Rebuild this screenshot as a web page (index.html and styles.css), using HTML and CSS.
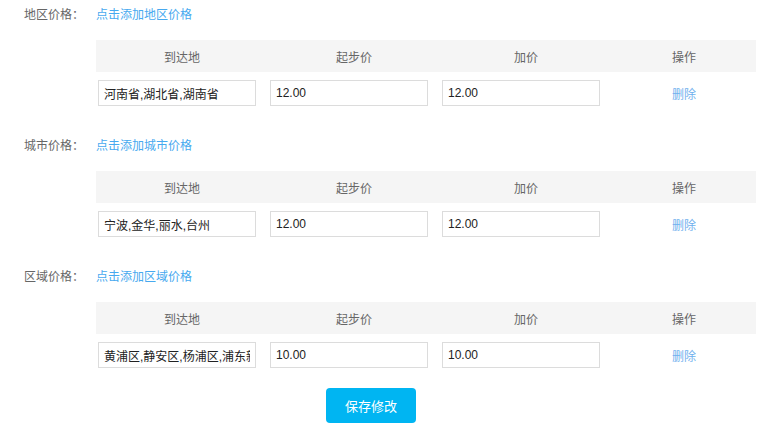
FILE: index.html
```html
<!DOCTYPE html>
<html lang="zh-CN">
<head>
<meta charset="utf-8">
<title>价格设置</title>
<link rel="stylesheet" href="styles.css">
</head>
<body>
<div class="page">
  <section class="block">
    <div class="block-head">
      <span class="block-label">地区价格：</span>
      <a class="add-link" href="#">点击添加地区价格</a>
    </div>
    <table class="price-table">
      <thead>
        <tr><th class="c1">到达地</th><th class="c2">起步价</th><th class="c3">加价</th><th class="c4">操作</th></tr>
      </thead>
      <tbody>
        <tr>
          <td><input class="field" type="text" value="河南省,湖北省,湖南省"></td>
          <td><input class="field" type="text" value="12.00"></td>
          <td><input class="field" type="text" value="12.00"></td>
          <td class="op"><a class="del" href="#">删除</a></td>
        </tr>
      </tbody>
    </table>
  </section>

  <section class="block">
    <div class="block-head">
      <span class="block-label">城市价格：</span>
      <a class="add-link" href="#">点击添加城市价格</a>
    </div>
    <table class="price-table">
      <thead>
        <tr><th class="c1">到达地</th><th class="c2">起步价</th><th class="c3">加价</th><th class="c4">操作</th></tr>
      </thead>
      <tbody>
        <tr>
          <td><input class="field" type="text" value="宁波,金华,丽水,台州"></td>
          <td><input class="field" type="text" value="12.00"></td>
          <td><input class="field" type="text" value="12.00"></td>
          <td class="op"><a class="del" href="#">删除</a></td>
        </tr>
      </tbody>
    </table>
  </section>

  <section class="block">
    <div class="block-head">
      <span class="block-label">区域价格：</span>
      <a class="add-link" href="#">点击添加区域价格</a>
    </div>
    <table class="price-table">
      <thead>
        <tr><th class="c1">到达地</th><th class="c2">起步价</th><th class="c3">加价</th><th class="c4">操作</th></tr>
      </thead>
      <tbody>
        <tr>
          <td><input class="field" type="text" value="黄浦区,静安区,杨浦区,浦东新区"></td>
          <td><input class="field" type="text" value="10.00"></td>
          <td><input class="field" type="text" value="10.00"></td>
          <td class="op"><a class="del" href="#">删除</a></td>
        </tr>
      </tbody>
    </table>
  </section>

  <div class="actions">
    <button class="save-btn" type="button">保存修改</button>
  </div>
</div>
</body>
</html>
```

FILE: styles.css
```css
* { box-sizing: border-box; }
html, body {
  margin: 0;
  padding: 0;
  background: #fff;
}
body {
  font-family: "Liberation Sans", "Noto Sans CJK SC", sans-serif;
  font-size: 12px;
  color: #666;
}
.page {
  width: 773px;
}
.block {
  margin-bottom: 17px;
}
.block:last-of-type {
  margin-bottom: 12px;
}
.block-head {
  height: 26px;
  display: flex;
  align-items: center;
  padding-left: 24px;
  margin-bottom: 14px;
}
.block-label {
  width: 72px;
  color: #666;
}
.add-link {
  color: #47a9ef;
  text-decoration: none;
}
.price-table {
  margin-left: 96px;
  width: 660px;
  border-collapse: collapse;
  table-layout: fixed;
}
.price-table th {
  height: 32px;
  background: #f5f5f5;
  font-weight: normal;
  color: #666;
  padding: 0;
  text-align: center;
}
.price-table .c1, .price-table .c2, .price-table .c3 { width: 172px; }
.price-table .c4 { width: 144px; }
.price-table td {
  height: 42px;
  padding: 0 0 0 2px;
  vertical-align: middle;
}
.price-table td.op {
  padding: 0;
  text-align: center;
}
.field {
  display: block;
  width: 158px;
  height: 26px;
  border: 1px solid #dcdcdc;
  padding: 0 5px;
  font-family: "Liberation Sans", "Noto Sans CJK SC", sans-serif;
  font-size: 12px;
  color: #222;
  outline: none;
  background: #fff;
}
.del {
  color: #6fb0ee;
  text-decoration: none;
}
.actions {
  padding-left: 326px;
}
.save-btn {
  width: 90px;
  height: 35px;
  border: none;
  border-radius: 4px;
  background: #00b5f2;
  color: #fff;
  font-family: "Liberation Sans", "Noto Sans CJK SC", sans-serif;
  font-size: 13px;
  cursor: pointer;
}
```
